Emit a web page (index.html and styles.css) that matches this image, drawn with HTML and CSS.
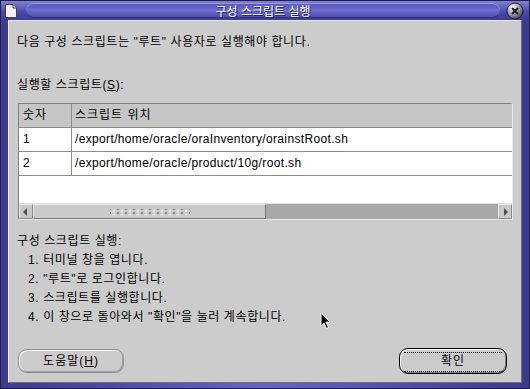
FILE: index.html
```html
<!DOCTYPE html>
<html lang="ko">
<head>
    <meta charset="UTF-8">
    <title>구성 스크립트 실행</title>
    <link rel="stylesheet" href="styles.css">
</head>
<body>

<!--창 전체-->
<div class="window">
    <!--제목 표시줄-->
    <div class="titlebar">
        <svg class="doc-icon" width="14" height="16" viewBox="0 0 14 16">
            <path d="M1.5 1.5 H9 L12.5 5 V14.5 H1.5 Z" fill="#f4f4f4" stroke="#404040"/>
            <path d="M9 1.5 V5 H12.5" fill="#d0d0d0" stroke="#404040"/>
        </svg>
        <div class="title-pill">구성 스크립트 실행</div>
        <svg class="close-icon" width="18" height="18" viewBox="0 0 18 18">
            <defs>
                <radialGradient id="ball" cx="0.35" cy="0.3" r="0.8">
                    <stop offset="0" stop-color="#ffffff"/>
                    <stop offset="0.5" stop-color="#a0a0b0"/>
                    <stop offset="1" stop-color="#303040"/>
                </radialGradient>
            </defs>
            <circle cx="9" cy="9" r="8" fill="url(#ball)" stroke="#202030"/>
            <path d="M6 6 L12 12 M12 6 L6 12" stroke="#202020" stroke-width="2"/>
        </svg>
    </div>

    <!--내용-->
    <div class="content">
        <p class="intro">다음 구성 스크립트는 "루트" 사용자로 실행해야 합니다.</p>

        <p class="label">실행할 스크립트(<u>S</u>):</p>

        <div class="table">
            <div class="row head">
                <div class="cell num">숫자</div>
                <div class="cell path">스크립트 위치</div>
            </div>
            <div class="row">
                <div class="cell num">1</div>
                <div class="cell path">/export/home/oracle/oraInventory/orainstRoot.sh</div>
            </div>
            <div class="row">
                <div class="cell num">2</div>
                <div class="cell path">/export/home/oracle/product/10g/root.sh</div>
            </div>
            <div class="empty"></div>
            <!--가로 스크롤바-->
            <div class="scrollbar">
                <div class="arrow left"></div>
                <div class="thumb"><span class="grip"></span></div>
                <div class="track"></div>
                <div class="arrow right"></div>
            </div>
        </div>

        <div class="steps">
            <p>구성 스크립트 실행:</p>
            <p class="step">1. 터미널 창을 엽니다.</p>
            <p class="step">2. "루트"로 로그인합니다.</p>
            <p class="step">3. 스크립트를 실행합니다.</p>
            <p class="step">4. 이 창으로 돌아와서 "확인"을 눌러 계속합니다.</p>
        </div>

        <div class="buttons">
            <div class="btn help">도움말(<u>H</u>)</div>
            <div class="btn ok"><span class="focus">확인</span></div>
        </div>

        <!--마우스 커서-->
        <svg class="cursor" width="12" height="18" viewBox="0 0 12 18">
            <path d="M1 1 V14 L4 11 L6.5 16.5 L8.5 15.5 L6 10 H10 Z" fill="#000" stroke="#fff" stroke-width="1"/>
        </svg>
    </div>
</div>

</body>
</html>
```

FILE: styles.css
```css
* {
    margin: 0;
    padding: 0;
}

body {
    background-color: #4a4aa8;
    font-family: "Liberation Sans", "Noto Sans CJK KR", sans-serif;
    font-size: 12px;
    color: #000;
}

/*창*/
.window {
    width: 530px;
    height: 389px;
    display: flex;
    flex-direction: column;
    background: linear-gradient(to right, #3a3a90, #6464c8 50%, #3a3a90);
    box-sizing: border-box;
    border: 1px solid #202040;
}

/*제목 표시줄*/
.titlebar {
    height: 19px;
    display: flex;
    align-items: center;
    padding: 0 5px 0 3px;
    background: linear-gradient(#8080d8, #4848a8 60%, #3c3c98);
}

.doc-icon {
    flex: none;
}

.title-pill {
    flex: 1;
    height: 15px;
    margin: 0 6px 0 8px;
    border-radius: 8px;
    background: linear-gradient(#5656b8, #6c6cd0 50%, #4a4aa8);
    box-shadow: inset 0 1px 0 #9a9ae8, inset 0 -1px 0 #30307a;
    color: #fff;
    text-align: center;
    line-height: 15px;
    font-family: "Noto Sans CJK KR", sans-serif;
    font-size: 12px;
    text-shadow: 1px 1px 0 #202050;
}

.close-icon {
    flex: none;
}

/*내용 영역*/
.content {
    position: relative;
    flex: 1;
    margin: 0 7px 5px 7px;
    display: flex;
    flex-direction: column;
    padding: 14px 8px 8px 8px;
    background-color: #cccccc;
    border-top: 1px solid #e8e8e8;
    border-left: 1px solid #f0f0f0;
    border-right: 1px solid #707070;
    border-bottom: 1px solid #707070;
    letter-spacing: 0.6px;
}

.intro {
    line-height: 14px;
}

.label {
    line-height: 14px;
    margin-top: 29px;
}

/*표*/
.table {
    margin: 11px 0 0 1px;
    height: 115px;
    display: flex;
    flex-direction: column;
    background-color: #fff;
    border-top: 1px solid #808080;
    border-left: 1px solid #808080;
    border-right: 1px solid #e8e8e8;
    border-bottom: 1px solid #e8e8e8;
    border-top-right-radius: 3px;
    letter-spacing: 0;
}

.row {
    display: flex;
    height: 24px;
    border-bottom: 1px solid #8c8c8c;
    box-sizing: border-box;
}

.row.head {
    background-color: #c6c6c6;
}

.cell {
    line-height: 23px;
    padding-left: 4px;
}

.cell.num {
    width: 48px;
    border-right: 1px solid #8c8c8c;
}

.cell.path {
    flex: 1;
    padding-left: 3px;
    letter-spacing: 0.35px;
}

.head .cell {
    letter-spacing: 1px;
}

.empty {
    flex: 1;
}

/*스크롤바*/
.scrollbar {
    height: 15px;
    display: flex;
    background-color: #a8a8a8;
    border-top: 1px solid #e0e0e0;
}

.scrollbar .arrow {
    width: 14px;
    background-color: #c8c8c8;
    position: relative;
    border: 1px solid #e8e8e8;
    border-right-color: #888;
    border-bottom-color: #888;
    box-sizing: border-box;
}

.scrollbar .arrow::after {
    content: "";
    position: absolute;
    top: 3px;
    border-top: 4px solid transparent;
    border-bottom: 4px solid transparent;
}

.scrollbar .left::after {
    left: 3px;
    border-right: 4px solid #505050;
}

.scrollbar .right::after {
    left: 5px;
    border-left: 4px solid #505050;
}

.thumb {
    width: 233px;
    display: flex;
    align-items: center;
    justify-content: center;
    background-color: #cacaca;
    border: 1px solid #e8e8e8;
    border-right-color: #777;
    border-bottom-color: #777;
    box-sizing: border-box;
}

.grip {
    width: 80px;
    height: 6px;
    background-image: radial-gradient(circle, #f8f8f8 0.8px, transparent 1px),
        radial-gradient(circle, #888 0.8px, transparent 1px);
    background-size: 8px 4px, 8px 4px;
    background-position: 0 0, 4px 2px;
}

.track {
    flex: 1;
}

/*설명*/
.steps {
    margin-top: 12px;
    line-height: 19px;
}

.step {
    padding-left: 11px;
}

/*버튼*/
.buttons {
    margin-top: auto;
    display: flex;
    justify-content: space-between;
    align-items: center;
    padding: 0 6px 0 1px;
}

.btn {
    height: 24px;
    width: 106px;
    box-sizing: border-box;
    border-radius: 9px;
    text-align: center;
    line-height: 22px;
    letter-spacing: 1px;
}

.help {
    border: 1px solid #909090;
    box-shadow: inset 1px 1px 0 #ffffff, inset -1px -1px 0 #a0a0a0;
}

.ok {
    height: 26px;
    width: 108px;
    border: 1px solid #000;
    box-shadow: inset 1px 1px 0 #ffffff, inset -1px -1px 0 #808080;
    padding: 3px 4px;
}

.ok .focus {
    display: block;
    height: 18px;
    line-height: 17px;
    border-top: 1px dotted #000;
    border-bottom: 1px dotted #000;
}

.cursor {
    position: absolute;
    left: 311px;
    top: 291px;
}
```
